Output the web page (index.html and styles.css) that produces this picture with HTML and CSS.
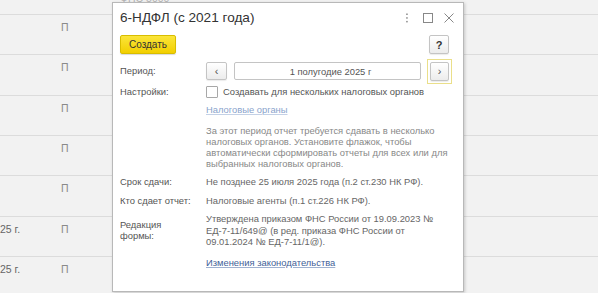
FILE: index.html
```html
<!DOCTYPE html>
<html lang="ru">
<head>
<meta charset="utf-8">
<title>6-НДФЛ</title>
<link rel="stylesheet" href="styles.css">
</head>
<body>
<div class="bg">
  <div class="row row-top"><span class="c-date"></span><span class="c-p"></span><span class="c-top">ФНС 5000</span></div>
  <div class="row"><span class="c-date"></span><span class="c-p">П</span></div>
  <div class="row"><span class="c-date"></span><span class="c-p">П</span></div>
  <div class="row"><span class="c-date"></span><span class="c-p">П</span></div>
  <div class="row"><span class="c-date"></span><span class="c-p">П</span></div>
  <div class="row"><span class="c-date"></span><span class="c-p">П</span></div>
  <div class="row"><span class="c-date">25 г.</span><span class="c-p">П</span></div>
  <div class="row"><span class="c-date">25 г.</span><span class="c-p">П</span></div>
</div>

<div class="dialog">
  <div class="head">
    <div class="title">6-НДФЛ (с 2021 года)</div>
    <div class="win-btns">
      <svg class="ico" width="10" height="10" viewBox="0 0 10 10"><rect x="4.2" y="0.5" width="1.5" height="1.5" fill="#888"/><rect x="4.2" y="4.2" width="1.5" height="1.5" fill="#888"/><rect x="4.2" y="7.9" width="1.5" height="1.5" fill="#888"/></svg>
      <svg class="ico" width="10" height="10" viewBox="0 0 10 10"><rect x="0.5" y="0.5" width="9" height="9" fill="none" stroke="#888" stroke-width="1"/></svg>
      <svg class="ico" width="10" height="10" viewBox="0 0 10 10"><path d="M0.5 0.5 L9.5 9.5 M9.5 0.5 L0.5 9.5" stroke="#888" stroke-width="1" fill="none"/></svg>
    </div>
  </div>
  <div class="bar">
    <button class="btn-yellow">Создать</button>
    <button class="btn btn-help">?</button>
  </div>
  <div class="form">
    <div class="lbl">Период:</div>
    <div class="period">
      <button class="btn btn-nav">&lsaquo;</button>
      <div class="field">1 полугодие 2025 г</div>
      <span class="focus"><button class="btn btn-nav">&rsaquo;</button></span>
    </div>

    <div class="lbl">Настройки:</div>
    <label class="chk"><span class="box"></span>Создавать для нескольких налоговых органов</label>

    <div></div>
    <div class="link-faded">Налоговые органы</div>

    <div></div>
    <div class="note">За этот период отчет требуется сдавать в несколько налоговых органов. Установите флажок, чтобы автоматически сформировать отчеты для всех или для выбранных налоговых органов.</div>

    <div class="lbl">Срок сдачи:</div>
    <div class="val">Не позднее 25 июля 2025 года (п.2 ст.230 НК РФ).</div>

    <div class="lbl">Кто сдает отчет:</div>
    <div class="val">Налоговые агенты (п.1 ст.226 НК РФ).</div>

    <div class="lbl">Редакция<br>формы:</div>
    <div class="val">Утверждена приказом ФНС России от 19.09.2023 № ЕД-7-11/649@ (в ред. приказа ФНС России от 09.01.2024 № ЕД-7-11/1@).</div>

    <div></div>
    <div class="link">Изменения законодательства</div>
  </div>
</div>
</body>
</html>
```

FILE: styles.css
```css
* { box-sizing: border-box; }
html, body { margin: 0; padding: 0; }
body {
  width: 598px;
  height: 293px;
  overflow: hidden;
  background: #f2f2f2;
  font-family: "Liberation Sans", Arial, sans-serif;
  font-size: 9.4px;
  color: #555;
  position: relative;
}

/* background list */
.bg { display: flex; flex-direction: column; }
.row {
  height: 40.33px;
  border-bottom: 1px solid #dcdcdc;
  display: flex;
  align-items: flex-start;
  padding-top: 6px;
  color: #8a8a8a;
  font-size: 10.5px;
}
.row-top { height: 15px; padding-top: 0; overflow: hidden; }
.c-top { margin-top: -8px; color: #b4b4b4; }
.c-date { width: 58px; flex: none; color: #666; font-size: 10.5px; }
.c-p { width: 62px; flex: none; padding-left: 3px; }

/* dialog */
.dialog {
  position: absolute;
  left: 112px;
  top: 2px;
  width: 352px;
  height: 290px;
  background: #fff;
  border: 1px solid #b8b8b8;
  box-shadow: 1px 1px 3px rgba(0,0,0,0.18);
  padding: 0 14px 0 7px;
  display: flex;
  flex-direction: column;
}
.head {
  display: flex;
  align-items: center;
  height: 28px;
  padding-top: 1px;
}
.title {
  flex: 1;
  font-size: 13.6px;
  color: #333;
}
.win-btns {
  display: flex;
  gap: 11px;
  align-items: center;
  margin-right: -5px;
}
.ico { display: block; }

.bar {
  display: flex;
  justify-content: space-between;
  align-items: center;
  margin-top: 4px;
  height: 19px;
}
button { font-family: inherit; margin: 0; padding: 0; cursor: default; }
.btn-yellow {
  width: 56px;
  height: 19px;
  border: 1px solid #d8bd00;
  border-radius: 2px;
  background: linear-gradient(#fbe53a, #f2cf00);
  color: #333;
  font-size: 10px;
  box-shadow: 0 1px 1px rgba(0,0,0,0.15);
}
.btn {
  border: 1px solid #c4c4c4;
  border-radius: 2px;
  background: linear-gradient(#ffffff, #ececec);
  color: #444;
  box-shadow: 0 1px 1px rgba(0,0,0,0.08);
}
.btn-help {
  width: 20px;
  height: 19px;
  font-weight: bold;
  font-size: 11px;
  color: #333;
}

.form {
  display: grid;
  grid-template-columns: 86px 1fr;
  align-items: center;
  margin-top: 6px;
}
.lbl { color: #555; line-height: 11.5px; }

.period {
  display: flex;
  align-items: center;
  height: 22px;
}
.btn-nav {
  width: 21px;
  height: 18px;
  font-size: 11px;
  line-height: 14px;
  color: #555;
}
.field {
  margin-left: 7px;
  width: 187px;
  height: 18px;
  border: 1px solid #c4c4c4;
  border-radius: 2px;
  display: flex;
  align-items: center;
  justify-content: center;
  color: #555;
  padding-left: 6px;
}
.focus {
  margin-left: 6px;
  padding: 2px;
  border: 1px solid #eadf8a;
  display: flex;
}
.focus .btn-nav { width: 19px; height: 19px; }

.chk {
  display: flex;
  align-items: center;
  margin-top: 3px;
  height: 13px;
  color: #555;
}
.box {
  width: 12px;
  height: 12px;
  border: 1px solid #a8a8a8;
  border-radius: 1px;
  background: #fff;
  margin-right: 5px;
  flex: none;
}

.link-faded {
  margin-top: 6px;
  color: #8aa3cc;
  text-decoration: underline;
  text-decoration-color: #c4d1e6;
  line-height: 12px;
}
.note {
  margin-top: 9px;
  color: #888;
  line-height: 11px;
  padding-right: 2px;
}
.val { color: #666; line-height: 11.5px; }
.form .lbl, .form .val { margin-top: 7px; }
.form .lbl:first-child { margin-top: 0; }
.form > .lbl:nth-child(3) { margin-top: 3px; }
.link {
  margin-top: 9px;
  color: #3f5f98;
  text-decoration: underline;
  text-decoration-color: #9fb1d0;
  line-height: 12px;
}
```
